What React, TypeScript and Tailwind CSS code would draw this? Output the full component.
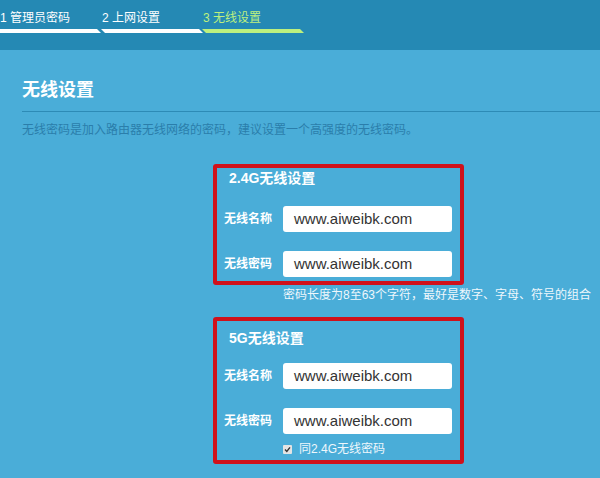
const FONT = { fontFamily: '"Liberation Sans", "Noto Sans CJK SC", sans-serif' };

const tabs = [
  { label: '1 管理员密码', active: false },
  { label: '2 上网设置', active: false },
  { label: '3 无线设置', active: true },
];

function Field({ label, value }: { label: string; value: string }) {
  return (
    <div className="flex items-center pl-[7px]">
      <span className="w-[59px] text-[12px] font-bold text-white leading-[16px]">{label}</span>
      <div className="w-[169px] h-[26px] bg-white rounded-[3px] pl-[11px] flex items-center text-[15px] text-[#333]">
        {value}
      </div>
    </div>
  );
}

export default function App() {
  return (
    <div className="w-[600px] h-[478px] overflow-hidden bg-[#4aadd8]" style={FONT}>
      <div className="h-[50px] bg-[#2589b4] flex">
        {tabs.map((t, i) => (
          <div key={i} className="w-[101px] flex flex-col pt-[10px]">
            <span className={`text-[12px] leading-[16px] ${t.active ? 'text-[#bdf07e]' : 'text-white'} ${i === 0 ? '' : 'pl-[1px]'}`}>
              {t.label}
            </span>
            <div className={`mt-[3px] h-[4px] skew-x-45 ${i === 0 ? 'w-[104px] -ml-[5px]' : 'w-[98px] ml-[2px]'} ${t.active ? 'bg-[#bdf07e]' : 'bg-white'}`} />
          </div>
        ))}
      </div>

      <div className="pl-[22px]">
        <h2 className="pt-[28px] text-[18px] leading-[24px] font-bold text-white">无线设置</h2>
        <div className="mt-[9px] h-px bg-[#2d8bb6]" />
        <p className="mt-[9px] text-[12px] leading-[18px] text-[#2b7eab]">
          无线密码是加入路由器无线网络的密码，建议设置一个高强度的无线密码。
        </p>

        <div className="ml-[191px] mt-[25px] w-[251px] border-4 border-[#d0111b] rounded-[3px] pb-[4px]">
          <div className="pl-[12px] text-[14px] leading-[20px] font-bold text-white">2.4G无线设置</div>
          <div className="mt-[18px] flex flex-col gap-[19px]">
            <Field label="无线名称" value="www.aiweibk.com" />
            <Field label="无线密码" value="www.aiweibk.com" />
          </div>
        </div>
        <p className="ml-[261px] mt-[1px] text-[12px] leading-[18px] text-[#eef7fc] whitespace-nowrap">
          密码长度为8至63个字符，最好是数字、字母、符号的组合
        </p>

        <div className="ml-[191px] mt-[13px] w-[251px] border-4 border-[#d0111b] rounded-[3px] pt-[7px] pb-[2px]">
          <div className="pl-[12px] text-[14px] leading-[20px] font-bold text-white">5G无线设置</div>
          <div className="mt-[15px] flex flex-col gap-[19px]">
            <Field label="无线名称" value="www.aiweibk.com" />
            <Field label="无线密码" value="www.aiweibk.com" />
          </div>
          <div className="mt-[6px] ml-[66px] flex items-center h-[18px]">
            <span className="w-[9px] h-[9px] bg-[#e4e4e4] rounded-[1px] flex items-center justify-center">
              <svg width="7" height="7" viewBox="0 0 7 7">
                <path d="M1 3.6 L2.8 5.4 L6 1.4" fill="none" stroke="#333" strokeWidth="1.4" />
              </svg>
            </span>
            <span className="ml-[7px] text-[12px] leading-[18px] text-[#eef7fc]">同2.4G无线密码</span>
          </div>
        </div>
      </div>
    </div>
  );
}
